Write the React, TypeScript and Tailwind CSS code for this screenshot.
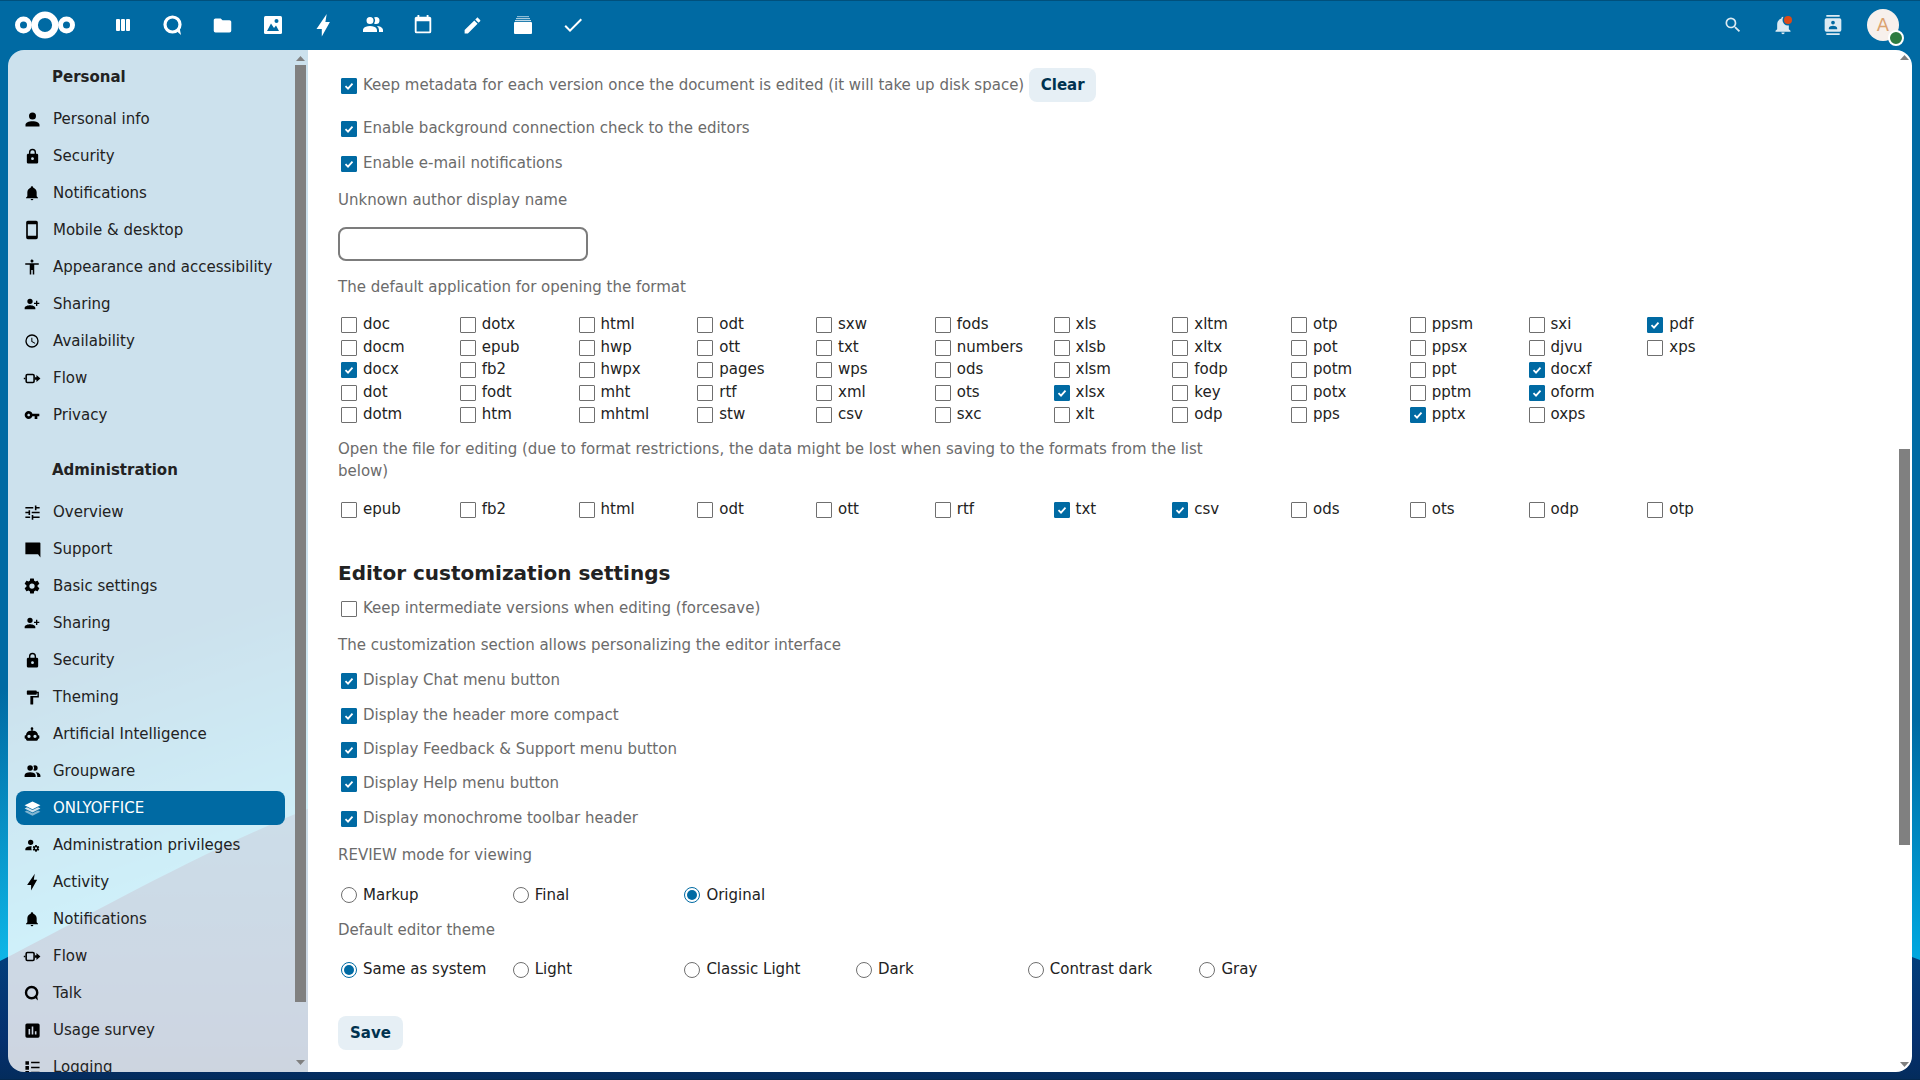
import type { ReactNode } from "react";

function Mdi({ d, size = 18, flip, className, children }: { d?: string; size?: number; flip?: boolean; className?: string; children?: ReactNode }) {
  return (
    <svg width={size} height={size} viewBox="0 0 24 24" fill="currentColor" className={className}>
      <g transform={flip ? "matrix(-1 0 0 1 24 0)" : undefined}>
        {d && <path d={d} />}
        {children}
      </g>
    </svg>
  );
}

const P = {
  account: "M12,4A4,4 0 0,1 16,8A4,4 0 0,1 12,12A4,4 0 0,1 8,8A4,4 0 0,1 12,4M12,14C16.42,14 20,15.79 20,18V20H4V18C4,15.79 7.58,14 12,14Z",
  lock: "M12,17A2,2 0 0,0 14,15C14,13.89 13.1,13 12,13A2,2 0 0,0 10,15A2,2 0 0,0 12,17M18,8A2,2 0 0,1 20,10V20A2,2 0 0,1 18,22H6A2,2 0 0,1 4,20V10C4,8.89 4.9,8 6,8H7V6A5,5 0 0,1 12,1A5,5 0 0,1 17,6V8H18M12,3A3,3 0 0,0 9,6V8H15V6A3,3 0 0,0 12,3Z",
  bell: "M21,19V20H3V19L5,17V11C5,7.9 7.03,5.17 10,4.29C10,4.19 10,4.1 10,4A2,2 0 0,1 12,2A2,2 0 0,1 14,4C14,4.1 14,4.19 14,4.29C16.97,5.17 19,7.9 19,11V17L21,19M14,21A2,2 0 0,1 12,23A2,2 0 0,1 10,21",
  phone: "M17,19H7V5H17M17,1H7C5.89,1 5,1.89 5,3V21A2,2 0 0,0 7,23H17A2,2 0 0,0 19,21V3C19,1.89 18.1,1 17,1Z",
  human: "M21 9H15V22H13V16H11V22H9V9H3V7H21M12 2A2 2 0 0 1 14 4A2 2 0 0 1 12 6C10.89 6 10 5.1 10 4C10 2.89 10.89 2 12 2Z",
  share: "M15,14C12.33,14 7,15.33 7,18V20H23V18C23,15.33 17.67,14 15,14M6,10V7H4V10H1V12H4V15H6V12H9V10M15,12A4,4 0 0,0 19,8A4,4 0 0,0 15,4A4,4 0 0,0 11,8A4,4 0 0,0 15,12Z",
  clock: "M12,20A8,8 0 0,0 20,12A8,8 0 0,0 12,4A8,8 0 0,0 4,12A8,8 0 0,0 12,20M12,2A10,10 0 0,1 22,12A10,10 0 0,1 12,22C6.47,22 2,17.5 2,12A10,10 0 0,1 12,2M12.5,7V12.25L17,14.92L16.25,16.15L11,13V7H12.5Z",
  key: "M7 14C5.9 14 5 13.1 5 12S5.9 10 7 10 9 10.9 9 12 8.1 14 7 14M12.6 10C11.8 7.7 9.6 6 7 6C3.7 6 1 8.7 1 12S3.7 18 7 18C9.6 18 11.8 16.3 12.6 14H16V18H20V14H23V10H12.6Z",
  tune: "M3,17V19H9V17H3M3,5V7H13V5H3M13,21V19H21V17H13V15H11V21H13M7,9V11H3V13H7V15H9V9H7M21,13V11H11V13H21M15,9H17V7H21V5H17V3H15V9Z",
  message: "M21,3H3V18H19L22,22V4A1,1 0 0,0 21,3Z",
  cog: "M12,15.5A3.5,3.5 0 0,1 8.5,12A3.5,3.5 0 0,1 12,8.5A3.5,3.5 0 0,1 15.5,12A3.5,3.5 0 0,1 12,15.5M19.43,12.97C19.47,12.65 19.5,12.33 19.5,12C19.5,11.67 19.47,11.34 19.43,11L21.54,9.37C21.73,9.22 21.78,8.95 21.66,8.73L19.66,5.27C19.54,5.05 19.27,4.96 19.05,5.05L16.56,6.05C16.04,5.66 15.5,5.32 14.87,5.07L14.5,2.42C14.46,2.18 14.25,2 14,2H10C9.75,2 9.54,2.18 9.5,2.42L9.13,5.07C8.5,5.32 7.96,5.66 7.44,6.05L4.95,5.05C4.73,4.96 4.46,5.05 4.34,5.27L2.34,8.73C2.21,8.95 2.27,9.22 2.46,9.37L4.57,11C4.53,11.34 4.5,11.67 4.5,12C4.5,12.33 4.53,12.65 4.57,12.97L2.46,14.63C2.27,14.78 2.21,15.05 2.34,15.27L4.34,18.73C4.46,18.95 4.73,19.03 4.95,18.95L7.44,17.94C7.96,18.34 8.5,18.68 9.13,18.93L9.5,21.58C9.54,21.82 9.75,22 10,22H14C14.25,22 14.46,21.82 14.5,21.58L14.87,18.93C15.5,18.67 16.04,18.34 16.56,17.94L19.05,18.95C19.27,19.03 19.54,18.95 19.66,18.73L21.66,15.27C21.78,15.05 21.73,14.78 21.54,14.63L19.43,12.97Z",
  paint: "M18,4V3A1,1 0 0,0 17,2H5A1,1 0 0,0 4,3V7A1,1 0 0,0 5,8H17A1,1 0 0,0 18,7V6H19V10H9V21A1,1 0 0,0 10,22H12A1,1 0 0,0 13,21V12H21V4H18Z",
  robot: "M12,2A2,2 0 0,1 14,4C14,4.74 13.6,5.39 13,5.73V7H14A7,7 0 0,1 21,14H22A1,1 0 0,1 23,15V18A1,1 0 0,1 22,19H21V20A2,2 0 0,1 19,22H5A2,2 0 0,1 3,20V19H2A1,1 0 0,1 1,18V15A1,1 0 0,1 2,14H3A7,7 0 0,1 10,7H11V5.73C10.4,5.39 10,4.74 10,4A2,2 0 0,1 12,2M7.5,13A2.5,2.5 0 0,0 5,15.5A2.5,2.5 0 0,0 7.5,18A2.5,2.5 0 0,0 10,15.5A2.5,2.5 0 0,0 7.5,13M16.5,13A2.5,2.5 0 0,0 14,15.5A2.5,2.5 0 0,0 16.5,18A2.5,2.5 0 0,0 19,15.5A2.5,2.5 0 0,0 16.5,13Z",
  group: "M16 17V19H2V17S2 13 9 13 16 17 16 17M12.5 7.5A3.5 3.5 0 1 0 9 11A3.5 3.5 0 0 0 12.5 7.5M15.94 13A5.32 5.32 0 0 1 18 17V19H22V17S22 13.37 15.94 13M15 4A3.39 3.39 0 0 0 13.07 4.59A5 5 0 0 1 13.07 10.41A3.39 3.39 0 0 0 15 11A3.5 3.5 0 0 0 15 4Z",
  admin: "M10 4A4 4 0 0 0 6 8A4 4 0 0 0 10 12A4 4 0 0 0 14 8A4 4 0 0 0 10 4M17 12C16.87 12 16.76 12.09 16.74 12.21L16.55 13.53C16.25 13.66 15.96 13.82 15.7 14L14.46 13.5C14.35 13.5 14.22 13.5 14.15 13.63L13.15 15.36C13.09 15.47 13.11 15.6 13.21 15.68L14.27 16.5C14.25 16.67 14.24 16.83 14.24 17C14.24 17.17 14.25 17.33 14.27 17.5L13.21 18.32C13.12 18.4 13.09 18.53 13.15 18.64L14.15 20.37C14.21 20.5 14.34 20.5 14.46 20.5L15.7 20C15.96 20.18 16.24 20.35 16.55 20.47L16.74 21.79C16.76 21.91 16.86 22 17 22H19C19.11 22 19.22 21.91 19.24 21.79L19.43 20.47C19.73 20.34 20 20.18 20.27 20L21.5 20.5C21.63 20.5 21.76 20.5 21.83 20.37L22.83 18.64C22.89 18.53 22.86 18.4 22.77 18.32L21.7 17.5C21.72 17.33 21.74 17.17 21.74 17C21.74 16.83 21.73 16.67 21.7 16.5L22.76 15.68C22.85 15.6 22.88 15.47 22.82 15.36L21.82 13.63C21.76 13.5 21.63 13.5 21.5 13.5L20.27 14C20 13.82 19.73 13.65 19.42 13.53L19.23 12.21C19.22 12.09 19.11 12 19 12H17M10 14C5.58 14 2 15.79 2 18V20H11.68A7 7 0 0 1 11 17A7 7 0 0 1 11.64 14.09C11.11 14.03 10.56 14 10 14M18 15.5C18.83 15.5 19.5 16.17 19.5 17C19.5 17.83 18.83 18.5 18 18.5C17.16 18.5 16.5 17.83 16.5 17C16.5 16.17 17.17 15.5 18 15.5Z",
  bolt: "M15.7 1L5.5 16H10.8V23.4L18.9 9.1H14.4Z",
  chart: "M19,3H5A2,2 0 0,0 3,5V19A2,2 0 0,0 5,21H19A2,2 0 0,0 21,19V5A2,2 0 0,0 19,3M9,17H7V10H9M13,17H11V7H13M17,17H15V13H17V17Z",
  list: "M2 3H7V8H2ZM10 4H22V6H10ZM2 10H7V15H2ZM10 11H22V13H10ZM2 17H7V22H2ZM10 18H22V20H10Z",
  folder: "M10,4H4C2.89,4 2,4.89 2,6V18A2,2 0 0,0 4,20H20A2,2 0 0,0 22,18V8C22,6.89 21.1,6 20,6H12L10,4Z",
  calendar: "M19 19H5V8H19M19 3H18V1H16V3H8V1H6V3H5C3.9 3 3 3.9 3 5V19A2 2 0 0 0 5 21H19A2 2 0 0 0 21 19V5C21 3.9 20.1 3 19 3Z",
  pencil: "M20.71,7.04C21.1,6.65 21.1,6 20.71,5.63L18.37,3.29C18,2.9 17.35,2.9 16.96,3.29L15.12,5.12L18.87,8.87M3,17.25V21H6.75L17.81,9.93L14.06,6.18L3,17.25Z",
  check: "M21,7L9,19L3.5,13.5L4.91,12.09L9,16.17L19.59,5.59L21,7Z",
  search: "M9.5,3A6.5,6.5 0 0,1 16,9.5C16,11.11 15.41,12.59 14.44,13.73L14.71,14H15.5L20.5,19L19,20.5L14,15.5V14.71L13.73,14.44C12.59,15.41 11.11,16 9.5,16A6.5,6.5 0 0,1 3,9.5A6.5,6.5 0 0,1 9.5,3M9.5,5C7,5 5,7 5,9.5C5,12 7,14 9.5,14C12,14 14,12 14,9.5C14,7 12,5 9.5,5Z",
  contacts: "M20,0H4V2H20V0M4,24H20V22H4V24M20,4H4A2,2 0 0,0 2,6V18A2,2 0 0,0 4,20H20A2,2 0 0,0 22,18V6A2,2 0 0,0 20,4M12,6.75A2.25,2.25 0 0,1 14.25,9A2.25,2.25 0 0,1 12,11.25A2.25,2.25 0 0,1 9.75,9A2.25,2.25 0 0,1 12,6.75M17,17H7V15.5C7,13.83 10.33,13 12,13C13.67,13 17,13.83 17,15.5V17Z",
};

const TalkIcon = ({ size = 24 }: { size?: number }) => (
  <Mdi size={size}>
    <circle cx="11.5" cy="11.5" r="7.5" fill="none" stroke="currentColor" strokeWidth="3.2" />
    <path d="M15 17.5L18.5 14.5L20 22Z" />
  </Mdi>
);

const FlowIcon = () => (
  <Mdi size={19}>
    <rect x="4" y="7" width="10" height="10" rx="1.5" fill="none" stroke="currentColor" strokeWidth="2" />
    <path d="M1 11H3V13H1ZM15 10.5H17V7.5L22 12L17 16.5V13.5H15Z" />
  </Mdi>
);

const LayersIcon = () => (
  <Mdi size={19}>
    <path d="M12 3L22 8L12 13L2 8Z" />
    <path d="M2 12L5 10.5L12 14L19 10.5L22 12L12 17Z" opacity="0.8" />
    <path d="M2 16L5 14.5L12 18L19 14.5L22 16L12 21Z" opacity="0.5" />
  </Mdi>
);

type Item = { label: string; icon: ReactNode; active?: boolean };

const personal: Item[] = [
  { label: "Personal info", icon: <Mdi d={P.account} size={21} /> },
  { label: "Security", icon: <Mdi d={P.lock} size={17} /> },
  { label: "Notifications", icon: <Mdi d={P.bell} size={16} /> },
  { label: "Mobile & desktop", icon: <Mdi d={P.phone} size={20} /> },
  { label: "Appearance and accessibility", icon: <Mdi d={P.human} size={18} /> },
  { label: "Sharing", icon: <Mdi d={P.share} size={16} flip /> },
  { label: "Availability", icon: <Mdi d={P.clock} size={16} /> },
  { label: "Flow", icon: <FlowIcon /> },
  { label: "Privacy", icon: <Mdi d={P.key} size={16} /> },
];

const administration: Item[] = [
  { label: "Overview", icon: <Mdi d={P.tune} size={19} /> },
  { label: "Support", icon: <Mdi d={P.message} size={19} /> },
  { label: "Basic settings", icon: <Mdi d={P.cog} size={18} /> },
  { label: "Sharing", icon: <Mdi d={P.share} size={16} flip /> },
  { label: "Security", icon: <Mdi d={P.lock} size={17} /> },
  { label: "Theming", icon: <Mdi d={P.paint} size={17} /> },
  { label: "Artificial Intelligence", icon: <Mdi d={P.robot} size={16} /> },
  { label: "Groupware", icon: <Mdi d={P.group} size={19} /> },
  { label: "ONLYOFFICE", icon: <LayersIcon />, active: true },
  { label: "Administration privileges", icon: <Mdi d={P.admin} size={16} /> },
  { label: "Activity", icon: <Mdi d={P.bolt} size={18} /> },
  { label: "Notifications", icon: <Mdi d={P.bell} size={16} /> },
  { label: "Flow", icon: <FlowIcon /> },
  { label: "Talk", icon: <TalkIcon size={18} /> },
  { label: "Usage survey", icon: <Mdi d={P.chart} size={19} /> },
  { label: "Logging", icon: <Mdi d={P.list} size={17} /> },
];

const formats: [string, boolean?][][] = [
  [["doc"], ["dotx"], ["html"], ["odt"], ["sxw"], ["fods"], ["xls"], ["xltm"], ["otp"], ["ppsm"], ["sxi"], ["pdf", true]],
  [["docm"], ["epub"], ["hwp"], ["ott"], ["txt"], ["numbers"], ["xlsb"], ["xltx"], ["pot"], ["ppsx"], ["djvu"], ["xps"]],
  [["docx", true], ["fb2"], ["hwpx"], ["pages"], ["wps"], ["ods"], ["xlsm"], ["fodp"], ["potm"], ["ppt"], ["docxf", true]],
  [["dot"], ["fodt"], ["mht"], ["rtf"], ["xml"], ["ots"], ["xlsx", true], ["key"], ["potx"], ["pptm"], ["oform", true]],
  [["dotm"], ["htm"], ["mhtml"], ["stw"], ["csv"], ["sxc"], ["xlt"], ["odp"], ["pps"], ["pptx", true], ["oxps"]],
];

const editable: [string, boolean?][] = [
  ["epub"], ["fb2"], ["html"], ["odt"], ["ott"], ["rtf"], ["txt", true], ["csv", true], ["ods"], ["ots"], ["odp"], ["otp"],
];

function Box({ checked }: { checked?: boolean }) {
  return (
    <span
      className={
        "ml-[3px] mr-[6px] mt-[2px] flex h-4 w-4 shrink-0 items-center justify-center rounded-[1px] border " +
        (checked ? "border-[#006aa3] bg-[#006aa3]" : "border-[#6f6f6f] bg-white")
      }
    >
      {checked && (
        <svg width="12" height="12" viewBox="0 0 12 12" fill="none" stroke="#fff" strokeWidth="1.8">
          <path d="M2.5 6.2L5 8.6L9.5 3.6" />
        </svg>
      )}
    </span>
  );
}

function Radio({ label, checked }: { label: string; checked?: boolean }) {
  return (
    <div className="flex h-[22px] items-center text-[#222]">
      <span
        className={
          "ml-[3px] mr-[6px] mt-[1px] flex h-4 w-4 shrink-0 items-center justify-center rounded-full border bg-white " +
          (checked ? "border-[#006aa3]" : "border-[#6f6f6f]")
        }
      >
        {checked && <span className="h-[10px] w-[10px] rounded-full bg-[#006aa3]" />}
      </span>
      {label}
    </div>
  );
}

function CheckRow({ label, checked, className, children }: { label: string; checked?: boolean; className: string; children?: ReactNode }) {
  return (
    <div className={"flex items-center text-[#6b6b6b] " + className}>
      <Box checked={checked} />
      {label}
      {children}
    </div>
  );
}

function Format({ name, checked }: { name: string; checked?: boolean }) {
  return (
    <div className="flex h-[22.5px] items-center text-[#222]">
      <Box checked={checked} />
      {name}
    </div>
  );
}

function ArrowUp() {
  return (
    <svg width="9" height="5" viewBox="0 0 9 5" fill="#808080" className="mx-auto shrink-0">
      <path d="M4.5 0L9 5H0Z" />
    </svg>
  );
}

function ArrowDown() {
  return (
    <svg width="9" height="5" viewBox="0 0 9 5" fill="#808080" className="mx-auto shrink-0">
      <path d="M0 0H9L4.5 5Z" />
    </svg>
  );
}

function NavItem({ item }: { item: Item }) {
  return (
    <div
      className={
        "ml-2 mr-[10px] mb-[3px] flex h-[34px] shrink-0 items-center rounded-lg " +
        (item.active ? "bg-[#006aa3] text-white" : "text-[#222]")
      }
    >
      <span className={"flex w-8 shrink-0 justify-center " + (item.active ? "text-white" : "text-black")}>{item.icon}</span>
      <span className="ml-[5px] whitespace-nowrap">{item.label}</span>
    </div>
  );
}

function Background() {
  return (
    <svg className="absolute inset-0" width="1920" height="1080" viewBox="0 0 1920 1080">
      <defs>
        <linearGradient id="leftGlow" gradientUnits="userSpaceOnUse" x1="0" y1="690" x2="90" y2="950">
          <stop offset="0" stopColor="#006aa3" />
          <stop offset="1" stopColor="#0fbcec" />
        </linearGradient>
        <linearGradient id="rightGlow" gradientUnits="userSpaceOnUse" x1="0" y1="720" x2="0" y2="960">
          <stop offset="0" stopColor="#006aa3" />
          <stop offset="1" stopColor="#00a8e0" />
        </linearGradient>
        <linearGradient id="deep" gradientUnits="userSpaceOnUse" x1="0" y1="820" x2="0" y2="1080">
          <stop offset="0" stopColor="#005590" />
          <stop offset="0.85" stopColor="#05306e" />
          <stop offset="1" stopColor="#042c5c" />
        </linearGradient>
      </defs>
      <rect x="0" y="600" width="500" height="480" fill="url(#leftGlow)" />
      <rect x="1700" y="700" width="220" height="380" fill="url(#rightGlow)" />
      <path d="M0 961C90 915 200 852 310 808C800 640 1400 800 1912 957L1920 960V1080H0Z" fill="url(#deep)" />
    </svg>
  );
}

export default function App() {
  const apps: ReactNode[] = [
    <Mdi key="dash" size={24}>
      <rect x="5" y="6" width="4" height="12" rx="1" />
      <rect x="10" y="6" width="4" height="12" rx="1" />
      <rect x="15" y="6" width="4" height="12" rx="1" />
    </Mdi>,
    <TalkIcon key="talk" size={24} />,
    <Mdi key="files" d={P.folder} size={21} />,
    <Mdi key="photos" size={24}>
      <rect x="3" y="3" width="18" height="18" rx="1.5" />
      <circle cx="15.5" cy="8" r="2" fill="#006aa3" />
      <path d="M6 18L10 10.5L13 15L15 12.5L18 18Z" fill="#006aa3" />
    </Mdi>,
    <Mdi key="activity" d={P.bolt} size={24} />,
    <Mdi key="contacts" d={P.group} size={24} />,
    <Mdi key="calendar" d={P.calendar} size={22} />,
    <Mdi key="notes" d={P.pencil} size={21} />,
    <Mdi key="deck" size={24}>
      <rect x="3" y="9" width="18" height="12" rx="1" />
      <rect x="4" y="7" width="16" height="1.2" opacity="0.75" />
      <rect x="5" y="5" width="14" height="1.2" opacity="0.65" />
      <rect x="6" y="3" width="12" height="1.2" opacity="0.55" />
    </Mdi>,
    <Mdi key="tasks" d={P.check} size={24} />,
  ];

  return (
    <div className="relative flex h-screen w-screen flex-col overflow-hidden bg-[#006aa3] font-['DejaVu_Sans',sans-serif] text-[15px] leading-[22px]">
      <Background />

      <header className="relative flex h-[50px] shrink-0 items-center text-white">
        <svg width="60" height="28" viewBox="0 0 60 28" className="ml-[15px] shrink-0" fill="none" stroke="#fff">
          <circle cx="30" cy="14" r="10.3" strokeWidth="6.4" />
          <circle cx="8.5" cy="14" r="6" strokeWidth="5" />
          <circle cx="51.5" cy="14" r="6" strokeWidth="5" />
        </svg>
        <nav className="ml-[22.5px] flex">
          {apps.map((icon, i) => (
            <span key={i} className="flex h-[50px] w-[50px] items-center justify-center">
              {icon}
            </span>
          ))}
        </nav>
        <div className="ml-auto flex pr-3 text-[#dceaf2]">
          <span className="flex h-[50px] w-[50px] items-center justify-center">
            <Mdi d={P.search} size={20} />
          </span>
          <span className="relative flex h-[50px] w-[50px] items-center justify-center">
            <Mdi d={P.bell} size={20} />
            <span className="absolute left-[26px] top-[16px] h-2 w-2 rounded-full bg-[#dd4a17] shadow-[0_0_0_1.5px_#006aa3]" />
          </span>
          <span className="flex h-[50px] w-[50px] items-center justify-center">
            <Mdi d={P.contacts} size={20} />
          </span>
          <span className="flex h-[50px] w-[50px] items-center justify-center">
            <span className="relative flex h-8 w-8 items-center justify-center rounded-full bg-[#f7f0ec] text-[18px] text-[#dba26f]">
              A
              <span className="absolute left-[21px] top-[21px] h-4 w-4 rounded-full border-2 border-white bg-[#2d7b41]" />
            </span>
          </span>
        </div>
      </header>

      <div className="relative flex min-h-0 flex-1 px-2 pb-2">
        <aside className="flex w-[300px] shrink-0 overflow-hidden rounded-l-2xl bg-white/80">
          <div className="flex w-[287px] shrink-0 flex-col overflow-hidden pt-[10px]">
            <h2 className="mb-2 flex h-[34px] shrink-0 items-center pl-[44px] font-bold text-[#222]">Personal</h2>
            {personal.map((item) => (
              <NavItem key={item.label} item={item} />
            ))}
            <h2 className="mb-2 mt-[18px] flex h-[34px] shrink-0 items-center pl-[44px] font-bold text-[#222]">Administration</h2>
            {administration.map((item) => (
              <NavItem key={item.label} item={item} />
            ))}
          </div>
          <div className="flex w-[11px] shrink-0 flex-col pt-[6px]">
            <ArrowUp />
            <div className="mt-[4px] h-[937px] w-[11px] bg-[#808080]" />
            <div className="mt-auto mb-[7px]">
              <ArrowDown />
            </div>
          </div>
        </aside>

        <main className="flex min-w-0 flex-1 overflow-hidden rounded-r-2xl bg-white">
          <div className="min-w-0 flex-1 pl-[30px] pt-[18px]">
            <CheckRow label="Keep metadata for each version once the document is edited (it will take up disk space)" checked className="h-[34px]">
              <button className="ml-[5px] h-[34px] w-[67px] rounded-lg bg-[#e6eff5] font-bold text-[#00324f]">Clear</button>
            </CheckRow>
            <CheckRow label="Enable background connection check to the editors" checked className="mt-[9px] h-[34px]" />
            <CheckRow label="Enable e-mail notifications" checked className="mt-px h-[34px]" />

            <p className="mt-[9px] h-[22px] text-[#6b6b6b]">Unknown author display name</p>
            <input type="text" className="mt-4 block h-[34px] w-[250px] rounded-lg border-2 border-[#7c7c7c] bg-white" />

            <p className="mt-[15px] h-[22px] text-[#6b6b6b]">The default application for opening the format</p>
            <div className="mt-[15px] grid grid-cols-[repeat(12,118.75px)]">
              {formats.flatMap((row, r) =>
                Array.from({ length: 12 }, (_, c) =>
                  row[c] ? <Format key={r + "-" + c} name={row[c][0]} checked={row[c][1]} /> : <div key={r + "-" + c} />
                )
              )}
            </div>

            <p className="mt-[12.5px] w-[900px] text-[#6b6b6b]">
              Open the file for editing (due to format restrictions, the data might be lost when saving to the formats from the list below)
            </p>
            <div className="mt-[15.5px] grid grid-cols-[repeat(12,118.75px)]">
              {editable.map(([name, checked]) => (
                <Format key={name} name={name} checked={checked} />
              ))}
            </div>

            <h2 className="mt-[39px] h-7 text-[20px] font-bold leading-7 text-[#222]">Editor customization settings</h2>
            <CheckRow label="Keep intermediate versions when editing (forcesave)" className="mt-[10px] h-[22px]" />
            <p className="mt-[15px] h-[22px] text-[#6b6b6b]">The customization section allows personalizing the editor interface</p>

            <div className="mt-[7px]">
              <CheckRow label="Display Chat menu button" checked className="h-[34.4px]" />
              <CheckRow label="Display the header more compact" checked className="h-[34.4px]" />
              <CheckRow label="Display Feedback & Support menu button" checked className="h-[34.4px]" />
              <CheckRow label="Display Help menu button" checked className="h-[34.4px]" />
              <CheckRow label="Display monochrome toolbar header" checked className="h-[34.4px]" />
            </div>

            <p className="mt-[9px] h-[22px] text-[#6b6b6b]">REVIEW mode for viewing</p>
            <div className="mt-[18px] grid grid-cols-[repeat(6,171.7px)]">
              <Radio label="Markup" />
              <Radio label="Final" />
              <Radio label="Original" checked />
            </div>

            <p className="mt-[13.5px] h-[22px] text-[#6b6b6b]">Default editor theme</p>
            <div className="mt-[17px] grid grid-cols-[repeat(6,171.7px)]">
              <Radio label="Same as system" checked />
              <Radio label="Light" />
              <Radio label="Classic Light" />
              <Radio label="Dark" />
              <Radio label="Contrast dark" />
              <Radio label="Gray" />
            </div>

            <button className="mt-9 h-[34px] w-[65px] rounded-lg bg-[#e6eff5] font-bold text-[#00324f]">Save</button>
          </div>

          <div className="mr-[2px] flex w-[11px] shrink-0 flex-col pt-[5px]">
            <ArrowUp />
            <div className="mt-[389px] h-[396px] w-[11px] bg-[#808080]" />
            <div className="mt-auto mb-[5px]">
              <ArrowDown />
            </div>
          </div>
        </main>
      </div>

      <div className="pointer-events-none absolute left-0 right-0 top-0 h-px bg-[#00507c]" />
      <div className="pointer-events-none absolute bottom-0 left-0 right-0 h-px bg-[#04284f]" />
    </div>
  );
}
